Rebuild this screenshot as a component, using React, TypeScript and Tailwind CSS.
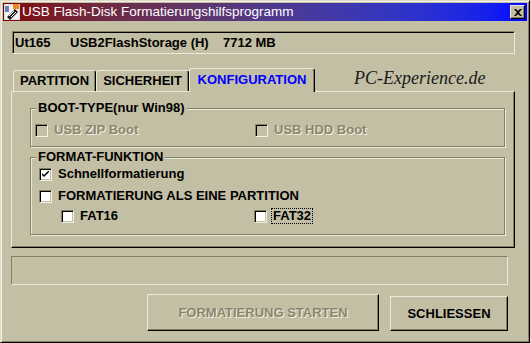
import React from 'react';

const FONT = "font-['Liberation_Sans',Arial,sans-serif]";

const CheckBox: React.FC<{ checked?: boolean; disabled?: boolean }> = ({ checked, disabled }) => (
  <span
    className={`w-[13px] h-[13px] shrink-0 border border-t-[#82805f] border-l-[#82805f] border-b-[#f2f0e4] border-r-[#f2f0e4] shadow-[inset_1px_1px_0_#000,inset_-1px_-1px_0_#c3bfa5] flex items-center justify-center ${
      disabled ? 'bg-[#c3bfa5]' : 'bg-white'
    }`}
  >
    {checked && (
      <svg width="7" height="7" viewBox="0 0 7 7">
        <path d="M0 2 L0 4 L2 6 L7 1 L7 -1 L2 4 Z" fill="#000" />
      </svg>
    )}
  </span>
);

const Option: React.FC<{
  label: string;
  checked?: boolean;
  disabled?: boolean;
  focus?: boolean;
  className?: string;
}> = ({ label, checked, disabled, focus, className = '' }) => (
  <div className={`flex items-center gap-[6px] h-[16px] ${className}`}>
    <CheckBox checked={checked} disabled={disabled} />
    <span
      className={`text-[13px] font-bold leading-[14px] whitespace-nowrap ${
        disabled ? 'text-[#8a866c] [text-shadow:1px_1px_0_#f2f0e4]' : 'text-black'
      } ${focus ? 'outline outline-1 outline-dotted outline-black px-[1px] -ml-[1px]' : ''}`}
    >
      {label}
    </span>
  </div>
);

const GroupBox: React.FC<{ title: string; className?: string; children: React.ReactNode }> = ({
  title,
  className = '',
  children,
}) => (
  <div
    className={`relative border border-[#82805f] shadow-[1px_1px_0_#ebe9dc,inset_1px_1px_0_#ebe9dc] ${className}`}
  >
    <span className="absolute -top-[9px] left-[5px] px-[2px] bg-[#c3bfa5] text-[13px] font-bold leading-[16px] text-black whitespace-nowrap">
      {title}
    </span>
    {children}
  </div>
);

const Tab: React.FC<{ label: string; active?: boolean; w: string }> = ({ label, active, w }) => (
  <div
    className={`${w} ${
      active ? 'h-[24px] -mb-[1px] z-10 text-[#0000ff]' : 'h-[21px] text-black'
    } relative bg-[#c3bfa5] border-t border-l border-r border-t-[#ebe9dc] border-l-[#ebe9dc] border-r-black rounded-t-[3px] shadow-[inset_-1px_0_0_#82805f] flex items-center justify-center pb-[1px] text-[13px] font-bold leading-[14px]`}
  >
    {label}
  </div>
);

export default function App() {
  return (
    <div
      className={`${FONT} w-[530px] h-[343px] bg-[#c3bfa5] border border-t-[#dedbc9] border-l-[#dedbc9] border-r-black border-b-black shadow-[inset_1px_1px_0_#f4f2e6,inset_-1px_-1px_0_#82805f] p-[2px] flex flex-col`}
    >
      {/* title bar */}
      <div className="h-[18px] bg-linear-to-r from-[#800000] to-[#0000ff] flex items-center pl-[1px] pr-[2px]">
        <svg width="16" height="16" viewBox="0 0 16 16" className="shrink-0">
          <rect x="0" y="0" width="16" height="16" fill="#dcdcdc" />
          <rect x="1" y="1" width="14" height="14" fill="#f4f4f4" />
          <rect x="9" y="0" width="6" height="5" fill="#f08a1c" />
          <path d="M3 13 L11 5 L14 8 L6 16 Z" fill="#1a1a1a" />
          <path d="M5 12 L10 7 M7 13 L12 8" stroke="#fff" strokeWidth="1" />
          <rect x="1" y="2" width="4" height="6" fill="#6d7fb8" />
        </svg>
        <span className="ml-[2px] text-white text-[13.5px] leading-[16px] whitespace-nowrap">
          USB Flash-Disk Formatierungshilfsprogramm
        </span>
        <div className="ml-auto w-[15px] h-[14px] bg-[#c3bfa5] border border-t-[#ebe9dc] border-l-[#ebe9dc] border-r-black border-b-black shadow-[inset_-1px_-1px_0_#82805f] flex items-center justify-center">
          <svg width="8" height="7" viewBox="0 0 8 7">
            <path d="M0 0 L2 0 L4 2 L6 0 L8 0 L5 3.5 L8 7 L6 7 L4 5 L2 7 L0 7 L3 3.5 Z" fill="#000" />
          </svg>
        </div>
      </div>

      {/* device info */}
      <div className="ml-[9px] mt-[10px] w-[503px] h-[23px] border border-t-[#82805f] border-l-[#82805f] border-b-[#ebe9dc] border-r-[#ebe9dc] shadow-[inset_1px_1px_0_#000] flex items-center pl-[2px] text-[13px] font-bold text-black whitespace-nowrap">
        <span className="w-[55px]">Ut165</span>
        <span className="w-[153px]">USB2FlashStorage (H)</span>
        <span>7712 MB</span>
      </div>

      {/* tabs */}
      <div className="ml-[8px] mt-[14px] h-[23px] flex items-end pl-[2px] relative z-10">
        <Tab label="PARTITION" w="w-[83px]" />
        <Tab label="SICHERHEIT" w="w-[93px]" />
        <Tab label="KONFIGURATION" w="w-[126px]" active />
        <span className="ml-[39px] mb-[4px] self-center font-['Liberation_Serif',serif] italic text-[18px] leading-[20px] text-[#1a1a1a]">
          PC-Experience.de
        </span>
      </div>

      {/* tab panel */}
      <div className="ml-[8px] w-[504px] h-[157px] border border-t-[#ebe9dc] border-l-[#ebe9dc] border-r-black border-b-black shadow-[inset_-1px_-1px_0_#82805f] pl-[18px] pt-[16px] flex flex-col">
        <GroupBox title="BOOT-TYPE(nur Win98)" className="w-[475px] h-[39px]">
          <div className="flex pl-[4px] pt-[13px]">
            <Option label="USB ZIP Boot" disabled className="w-[220px]" />
            <Option label="USB HDD Boot" disabled />
          </div>
        </GroupBox>
        <GroupBox title="FORMAT-FUNKTION" className="mt-[10px] w-[475px] h-[78px]">
          <div className="flex flex-col pl-[8px] pt-[8px]">
            <Option label="Schnellformatierung" checked />
            <Option label="FORMATIERUNG ALS EINE PARTITION" className="mt-[6px]" />
            <div className="flex mt-[4px] pl-[22px]">
              <Option label="FAT16" className="w-[193px]" />
              <Option label="FAT32" focus />
            </div>
          </div>
        </GroupBox>
      </div>

      {/* status */}
      <div className="ml-[8px] mt-[8px] w-[497px] h-[29px] border border-t-[#82805f] border-l-[#82805f] border-b-[#ebe9dc] border-r-[#ebe9dc]" />

      {/* buttons */}
      <div className="ml-[8px] mt-[9px] w-[497px] flex justify-end items-end gap-[11px]">
        <button className="w-[232px] h-[37px] bg-[#c3bfa5] border border-t-[#ebe9dc] border-l-[#ebe9dc] border-r-black border-b-black shadow-[inset_-1px_-1px_0_#82805f] text-[13px] font-bold text-[#8a866c] [text-shadow:1px_1px_0_#f2f0e4]">
          FORMATIERUNG STARTEN
        </button>
        <button className="w-[118px] h-[35px] bg-[#c3bfa5] border border-t-[#ebe9dc] border-l-[#ebe9dc] border-r-black border-b-black shadow-[inset_-1px_-1px_0_#82805f] text-[13px] font-bold text-black">
          SCHLIESSEN
        </button>
      </div>
    </div>
  );
}
